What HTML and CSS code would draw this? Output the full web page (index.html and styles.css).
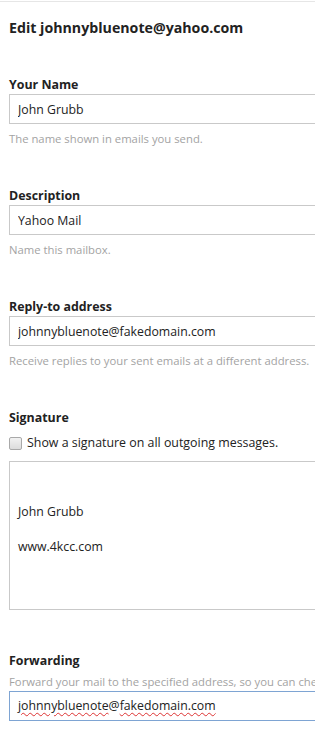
FILE: index.html
```html
<!DOCTYPE html>
<html lang="en">
<head>
    <meta charset="UTF-8">
    <meta name="viewport" content="width=device-width, initial-scale=1.0">
    <title>Edit account</title>
    <link rel="stylesheet" href="styles.css">
</head>
<body>

    <!-- Account settings panel -->
    <div class="panel">
        <h2 class="title">Edit johnnybluenote@yahoo.com</h2>

        <div class="field first">
            <label class="label" for="name">Your Name</label>
            <input class="text-input" type="text" id="name" value="John Grubb">
            <p class="help">The name shown in emails you send.</p>
        </div>

        <div class="field">
            <label class="label" for="desc">Description</label>
            <input class="text-input" type="text" id="desc" value="Yahoo Mail">
            <p class="help">Name this mailbox.</p>
        </div>

        <div class="field">
            <label class="label" for="reply">Reply-to address</label>
            <input class="text-input" type="text" id="reply" value="johnnybluenote@fakedomain.com">
            <p class="help">Receive replies to your sent emails at a different address.</p>
        </div>

        <div class="field">
            <div class="label">Signature</div>
            <label class="check-row">
                <input type="checkbox" class="check">
                <span>Show a signature on all outgoing messages.</span>
            </label>
            <div class="signature-box">
                <p>John Grubb</p>
                <p>www.4kcc.com</p>
            </div>
        </div>

        <div class="field forwarding">
            <div class="label">Forwarding</div>
            <p class="help tight">Forward your mail to the specified address, so you can check it from one place.</p>
            <div class="text-input focused"><span class="misspelled">johnnybluenote</span>@<span class="misspelled">fakedomain.com</span></div>
        </div>
    </div>

</body>
</html>
```

FILE: styles.css
```css
html, body {
    margin: 0;
    padding: 0;
    background-color: white;
    overflow: hidden;
}

body {
    font-family: "Open Sans", "Noto Sans", Arial, sans-serif;
    color: #222;
    border-top: 1px solid #e6e6e6;
    margin-top: 1px;
}

.panel {
    padding: 0 0 0 9px;
    width: 360px;
}

.title {
    font-size: 14.2px;
    font-weight: bold;
    line-height: 18px;
    margin: 17px 0 0 0;
}

.field {
    margin-top: 39px;
}

.label {
    display: block;
    font-size: 12.4px;
    font-weight: bold;
    line-height: 18px;
}

.text-input {
    display: block;
    box-sizing: border-box;
    width: 360px;
    height: 30px;
    margin: 0;
    padding: 0 8px;
    border: 1px solid #c9c9c9;
    font-family: inherit;
    font-size: 12.3px;
    line-height: 28px;
    color: #222;
    outline: none;
}

.text-input.focused {
    border-color: #7ea4d3;
}

.misspelled {
    text-decoration: underline wavy #d33;
    text-decoration-thickness: 1px;
    text-underline-offset: 2px;
}

.help {
    margin: 6px 0 0 0;
    font-size: 11.3px;
    line-height: 18px;
    color: #a3a3a3;
    white-space: nowrap;
}

.help.tight {
    margin: 3px 0 0 0;
}

.check-row {
    display: flex;
    align-items: center;
    gap: 5px;
    margin-top: 7px;
    font-size: 12.4px;
    line-height: 18px;
}

.check {
    appearance: none;
    box-sizing: border-box;
    width: 13px;
    height: 13px;
    margin: 0;
    border: 1px solid #a9a9a9;
    border-radius: 2px;
    background: linear-gradient(#f2f2f2, #dcdcdc);
}

.signature-box {
    box-sizing: border-box;
    width: 360px;
    height: 149px;
    margin-top: 9px;
    padding: 41px 8px 0 8px;
    border: 1px solid #c9c9c9;
    font-size: 12.3px;
    line-height: 17.5px;
}

.signature-box p {
    margin: 0 0 17.5px 0;
}

.forwarding {
    margin-top: 42px;
}
```
